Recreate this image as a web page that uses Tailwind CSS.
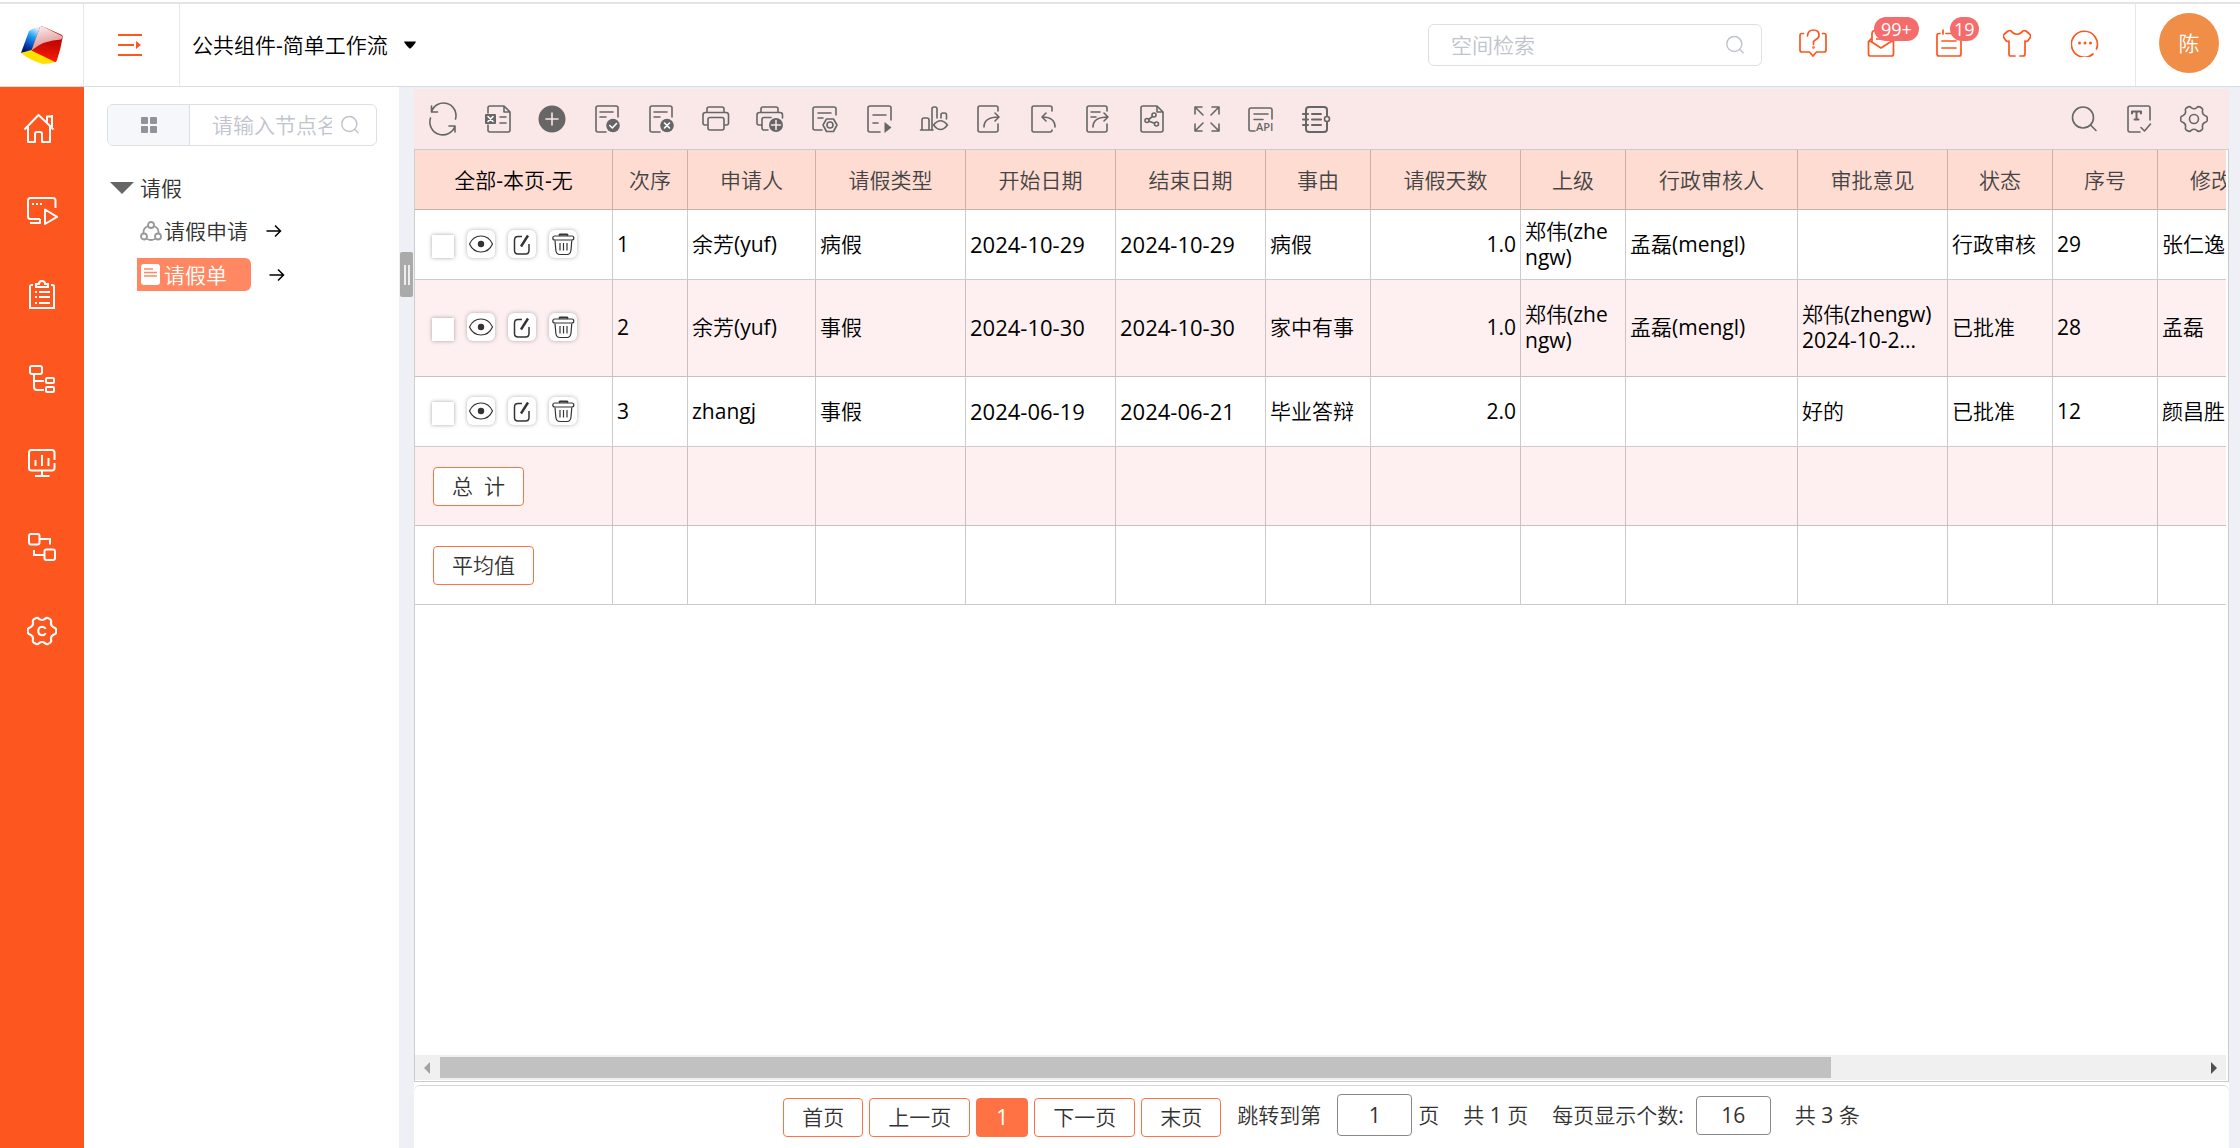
<!DOCTYPE html>
<html lang="zh-CN">
<head>
    <meta charset="UTF-8">
    <meta name="viewport" content="width=device-width, initial-scale=1.0">
    <title>公共组件-简单工作流</title>
    <script src="https://cdn.jsdelivr.net/npm/@tailwindcss/browser@4"></script>
</head>
<body class="h-screen flex flex-col overflow-hidden bg-white text-[21px] leading-[26px] text-[#333] font-['Open_Sans','Noto_Sans_CJK_SC_DemiLight','Noto_Sans_CJK_SC_Light','Noto_Sans_CJK_SC',sans-serif]">

    <!-- shared icons, drawn on a 28px grid -->
    <svg class="hidden">
        <symbol id="search" viewBox="0 0 28 28"><circle cx="13" cy="12.500" r="10.500"/><path d="M20.500 20l5.500 5.500"/></symbol>
        <symbol id="gearline" viewBox="0 0 28 28">
            <path id="tooth" d="M7.200 2.400L8.600 1.800Q10 1.300 11.200 2.600Q14 4.800 16.800 2.600Q18 1.300 19.400 1.800L20.800 2.400"/>
            <use href="#tooth" transform="rotate(60 14 14)"/><use href="#tooth" transform="rotate(120 14 14)"/><use href="#tooth" transform="rotate(180 14 14)"/><use href="#tooth" transform="rotate(240 14 14)"/><use href="#tooth" transform="rotate(300 14 14)"/>
        </symbol>
        <symbol id="eye" viewBox="0 0 28 28"><path d="M2.500 14C5 8.500 9.500 6 14 6s9 2.500 11.500 8C23 19.500 18.500 22 14 22S5 19.500 2.500 14z"/><circle cx="14" cy="14" r="3.200" fill="#333" stroke="none"/></symbol>
        <symbol id="edit" viewBox="0 0 28 28"><path d="M14 6.500H10Q6.500 6.500 6.500 10V20.500Q6.500 24 10 24H17.500Q21 24 21 20.500V14" stroke-width="1.500"/><path d="M20 5.500L13 16.500" stroke-width="2.400"/></symbol>
        <symbol id="trash" viewBox="0 0 28 28"><path d="M10 5.500L11 4.500H18L19 5.500" stroke-width="1.800"/><rect x="3.800" y="6" width="21" height="4" rx="2"/><path d="M6 10.500L6.800 20Q7.200 24.500 11 24.500H18Q21.500 24.500 22 20L22.800 10.500M11 13v7.500M14.500 13v7.500M18 13v7.500"/></symbol>
        <symbol id="arrow" viewBox="0 0 16 14"><path d="M0.500 7h14M9 1.500l5.500 5.500l-5.500 5.500"/></symbol>
    </svg>

    <header class="h-[87px] shrink-0 flex items-stretch border-b border-[#d8dce5] pt-0.5">
        <div class="flex flex-1 border-t-2 border-[#e3e3e3]">
            <a href="#" aria-label="首页" class="w-[84px] flex items-center justify-center border-r border-[#e8e8e8]">
                <svg class="w-[42px] h-[38px]" viewBox="0 0 42 38">
                    <defs>
                        <linearGradient id="blue" x1="0.700" y1="0" x2="0.300" y2="1"><stop offset="0" stop-color="#d5efff"/><stop offset="0.350" stop-color="#1e9df5"/><stop offset="0.800" stop-color="#0030a0"/><stop offset="1" stop-color="#001070"/></linearGradient>
                        <linearGradient id="pale" x1="0.300" y1="0" x2="0.600" y2="1"><stop offset="0" stop-color="#fbeaea"/><stop offset="1" stop-color="#d98484"/></linearGradient>
                        <linearGradient id="red" x1="0.600" y1="0" x2="0.500" y2="1"><stop offset="0" stop-color="#a80000"/><stop offset="0.500" stop-color="#c80a00"/><stop offset="1" stop-color="#ff1c00"/></linearGradient>
                    </defs>
                    <path d="M8 5Q14 1 19 1L11 25L0 27z" fill="url(#blue)"/>
                    <path d="M0 27L12 23.500L35 36Q28 38 22 38Q10 35 0 27z" fill="#ffe000"/>
                    <path d="M19 1Q21 0 23 1L41 9Q42 10 41.500 12Q40 22 36 34Q35 37 33 35.500L10.500 24.500z" fill="url(#red)"/>
                    <path d="M19 1Q21 0 23 1L41 10Q41.500 12 40 13.500Q23 14 10.500 24.500z" fill="url(#pale)"/>
                </svg>
            </a>
            <button aria-label="展开菜单" class="w-24 flex items-center justify-center border-r border-[#e8e8e8] pr-1">
                <svg class="w-6 h-6" viewBox="0 0 24 24" fill="none" stroke="#fd561f" stroke-width="1.800"><path d="M0 2H24M0 12H16M0 22H24"/><path d="M18 8l5 4l-5 4z" fill="#fd561f" stroke="none"/></svg>
            </button>
            <button class="flex items-center gap-4 pl-3 text-black">
                公共组件-简单工作流
                <svg class="w-3 h-2" viewBox="0 0 12 8"><path d="M0 0.500H12Q11 3 6.500 7.500H5.500Q1 3 0 0.500z"/></svg>
            </button>

            <div class="ml-auto flex items-center">
                <label class="w-[334px] h-[42px] flex items-center border border-[#dcdfe6] rounded-md pl-[22px] pr-4 mr-[37px]">
                    <input type="text" aria-label="空间检索" placeholder="空间检索" class="flex-1 min-w-0 outline-none placeholder:text-[#c0c4cc]">
                    <svg class="w-5 h-5 fill-none stroke-[#c0c4cc] stroke-2"><use href="#search"/></svg>
                </label>
                <div class="flex items-center gap-10 pb-1 mr-9 text-[#fd561f]">
                    <button aria-label="帮助">
                        <svg class="size-7" viewBox="0 0 28 28" fill="none" stroke="currentColor" stroke-width="1.700" stroke-linecap="round"><path d="M4.500 4.500H3Q1 4.500 1 6.500V21Q1 23 3 23H10.500L14 27L17.500 23H25Q27 23 27 21V6.500Q27 4.500 25 4.500H23.500"/><path d="M8.500 7Q8.800 1 14.500 1T20 6.500Q20 9 17 10.500T14.500 14V15.500"/><circle cx="14.500" cy="18.500" r="0.500"/></svg>
                    </button>
                    <button aria-label="消息" class="relative">
                        <svg class="size-7" viewBox="0 0 28 28" fill="none" stroke="currentColor" stroke-width="1.700" stroke-linejoin="round"><path d="M1.500 12.500H4L14 19L24 12.500H26.500V25Q26.500 27 24.500 27H3.500Q1.500 27 1.500 25zM1.500 12.500L5 9M5 13V4.500Q5 1.500 8 1.500H19M9 6h8M9 10h10"/></svg>
                        <span class="absolute -top-3 left-[7px] h-6 px-[7px] rounded-full bg-[#f56c6c] text-white text-[18px] leading-6">99+</span>
                    </button>
                    <button aria-label="待办" class="relative">
                        <svg class="size-7" viewBox="0 0 28 28" fill="none" stroke="currentColor" stroke-width="1.700" stroke-linecap="round"><path d="M5 4.500H4Q2 4.500 2 6.500V25Q2 27 4 27H24Q26 27 26 25V12M11 4.500H18M8 1v4M7 12h14M7 19h14"/></svg>
                        <span class="absolute -top-3 left-[15px] h-6 px-1 rounded-full bg-[#f56c6c] text-white text-[18px] leading-6">19</span>
                    </button>
                    <button aria-label="主题">
                        <svg class="size-7" viewBox="0 0 28 28" fill="none" stroke="currentColor" stroke-width="1.700" stroke-linecap="round" stroke-linejoin="round"><path d="M12 27H7.500Q6 27 6 25V12Q3.500 13 2.500 11L0.500 8Q0 6.500 1.500 5L5 2Q8 1 9.500 3.500Q14 7 18.500 3.500Q20 1 23 2L26.500 5Q28 6.500 27.500 8L25.500 11Q24.500 13 22 12V25Q22 27 20 27H17"/></svg>
                    </button>
                    <button aria-label="更多">
                        <svg class="size-7" viewBox="0 0 28 28" fill="none" stroke="currentColor" stroke-width="1.700" stroke-linecap="round"><path d="M22 25A13 13 0 1 1 25.500 20"/><g fill="currentColor" stroke="none"><circle cx="8.500" cy="14" r="1.500"/><circle cx="14" cy="14" r="1.500"/><circle cx="19.500" cy="14" r="1.500"/></g></svg>
                    </button>
                </div>
                <div class="h-full flex items-center border-l border-[#e8e8e8] pl-[23px] pr-[21px] pb-1">
                    <button class="size-[60px] rounded-full bg-[#f08e47] text-white">陈</button>
                </div>
            </div>
        </div>
    </header>

    <div class="flex flex-1 min-h-0">
        <nav class="w-[84px] shrink-0 bg-[#fd561f] text-white">
            <a href="#" aria-label="主页" class="h-[82px] flex items-center justify-center pr-1.5">
                <svg class="size-8" viewBox="0 0 32 32" fill="none" stroke="currentColor" stroke-width="2" stroke-linejoin="round"><path d="M1.500 17.500L15.500 3L24 11V4.500H29.500M29 3V16M24 11L30.500 17.500M5 15V30H12V22Q12 20 14 20H17Q19 20 19 22V30H27V15"/></svg>
            </a>
            <a href="#" aria-label="应用" class="h-[84px] flex items-center justify-center">
                <svg class="size-8" viewBox="0 0 32 32" fill="none" stroke="currentColor" stroke-width="2" stroke-linejoin="round"><path d="M14 24H4.500Q2 24 2 21.500V5.500Q2 3 4.500 3H27Q29.500 3 29.500 5.500V13M14 24V28H4M19 14.500V29L31 21.800z"/><path d="M6 9h2M10 9h2M14 9h2"/></svg>
            </a>
            <a href="#" aria-label="任务" class="h-[84px] flex items-center justify-center">
                <svg class="size-8" viewBox="0 0 32 32" fill="none" stroke="currentColor" stroke-width="2"><path d="M7 6H5.500Q4 6 4 7.500V29H28V7.500Q28 6 26.500 6H25M10 8V5H13Q13 2 16 2T19 5H22V8zM9 13h2M9 18h2M9 24h2M13 13h11M13 18h11M13 24h11"/></svg>
            </a>
            <a href="#" aria-label="组织" class="h-[84px] flex items-center justify-center">
                <svg class="size-8" viewBox="0 0 32 32" fill="none" stroke="currentColor" stroke-width="2"><rect x="4" y="3" width="12" height="8" rx="2"/><rect x="20" y="15" width="8" height="5" rx="1"/><rect x="20" y="24" width="8" height="5" rx="1"/><path d="M8 11V24Q8 27 11 27H18M8 18H18"/></svg>
            </a>
            <a href="#" aria-label="报表" class="h-[84px] flex items-center justify-center">
                <svg class="size-8" viewBox="0 0 32 32" fill="none" stroke="currentColor" stroke-width="2"><path d="M28.500 13V5.500Q28.500 3 26 3H5.500Q3 3 3 5.500V21Q3 23.500 5.500 23.500H26Q28.500 23.500 28.500 21V16M16 24V29M9 29H23.500M9.500 13V19M16 8V19M22.500 11V19"/></svg>
            </a>
            <a href="#" aria-label="流程" class="h-[84px] flex items-center justify-center">
                <svg class="size-8" viewBox="0 0 32 32" fill="none" stroke="currentColor" stroke-width="2"><rect x="3" y="3" width="10.500" height="10.500" rx="2"/><rect x="18.500" y="18.500" width="10.500" height="10.500" rx="2"/><path d="M14 8H24V13.500M18 24H8V19"/></svg>
            </a>
            <a href="#" aria-label="系统设置" class="h-[84px] flex items-center justify-center">
                <svg class="size-8" viewBox="-1 -1 30 30" fill="none" stroke="currentColor" stroke-width="2"><use href="#gearline" width="28" height="28"/><path d="M17.500 12Q16.500 10 14 10Q10.500 10.500 10.500 14T14 18Q16.500 18 17.500 16"/></svg>
            </a>
        </nav>

        <aside class="w-[315px] shrink-0 pt-[17px] px-[23px]">
            <div class="w-[270px] h-[42px] flex border border-[#dcdfe6] rounded-md overflow-hidden">
                <button aria-label="视图" class="w-[82px] shrink-0 flex items-center justify-center bg-[#f5f7fa] border-r border-[#dcdfe6]">
                    <svg class="size-4" viewBox="0 0 16 16" fill="#909399"><rect width="7" height="7" rx="1"/><rect x="9" width="7" height="7" rx="1"/><rect y="9" width="7" height="7" rx="1"/><rect x="9" y="9" width="7" height="7" rx="1"/></svg>
                </button>
                <label class="flex-1 min-w-0 flex items-center gap-2 pl-[22px] pr-4">
                    <input type="text" aria-label="节点名称" placeholder="请输入节点名称" class="flex-1 min-w-0 outline-none placeholder:text-[#c0c4cc]">
                    <svg class="w-5 h-5 shrink-0 fill-none stroke-[#c0c4cc] stroke-2"><use href="#search"/></svg>
                </label>
            </div>
            <ul class="mt-[26px] pl-[3px]">
                <li class="h-8 flex items-center gap-1.5">
                    <svg class="w-6 h-3" viewBox="0 0 24 12" fill="#666"><path d="M0 0H24L12 12z"/></svg>
                    请假
                </li>
                <li class="h-[54px] flex items-center gap-[18px] pl-[30px]">
                    <a href="#" class="flex items-center gap-0.5">
                        <svg class="w-[22px] h-5" viewBox="0 0 22 20" fill="none" stroke="#999" stroke-width="1.800"><circle cx="11" cy="4" r="3"/><circle cx="4" cy="15.500" r="3"/><circle cx="18" cy="15.500" r="3"/><path d="M8 5Q3 7 3.500 12.500M14 5Q19 7 18.500 12.500M7 18Q11 20 15 18"/></svg>
                        请假申请
                    </a>
                    <svg class="w-4 h-3.5 fill-none stroke-black stroke-[1.5]"><use href="#arrow"/></svg>
                </li>
                <li class="h-[33px] flex items-center gap-[18px] pl-[27px]">
                    <a href="#" class="w-[114px] h-[33px] flex items-center gap-1 pl-1 rounded-r-md bg-[#ff8862] text-white">
                        <svg class="w-[19px] h-[21px]" viewBox="0 0 19 21"><rect width="19" height="21" rx="3" fill="#fff"/><path d="M3 5H12M3 8.500H16M3 12H16" stroke="#ff8862" stroke-width="1.500"/></svg>
                        请假单
                    </a>
                    <svg class="w-4 h-3.5 fill-none stroke-black stroke-[1.5]"><use href="#arrow"/></svg>
                </li>
            </ul>
        </aside>

        <!-- splitter -->
        <div class="w-[15px] shrink-0 bg-[#eff0f6] pt-[165px] pl-px">
            <div class="w-[13px] h-[45px] rounded-xs bg-[#aaa] flex items-center justify-center gap-0.5">
                <span class="w-0.5 h-5 bg-[#eee]"></span>
                <span class="w-0.5 h-5 bg-[#eee]"></span>
            </div>
        </div>

        <main class="flex-1 min-w-0 flex flex-col border-t-2 border-[#eff0f6]">
            <div class="h-[60px] shrink-0 flex items-center justify-between bg-[#fae8e8] px-[15px] pr-[21px]">
                <div id="tools" class="flex items-center justify-between w-[901px]"></div>
                <div id="tools2" class="flex items-center gap-[27px]"></div>
            </div>

            <div class="flex-1 min-h-0 flex flex-col justify-between border border-[#ccc] pr-0.5 pb-px">
                <div class="overflow-hidden">
                    <table class="table-fixed w-[1871px] border-separate border-spacing-0 text-black">
                        <colgroup>
                            <col class="w-[198px]"><col class="w-[75px]"><col class="w-[128px]"><col class="w-[150px]"><col class="w-[150px]"><col class="w-[150px]"><col class="w-[105px]"><col class="w-[150px]"><col class="w-[105px]"><col class="w-[172px]"><col class="w-[150px]"><col class="w-[105px]"><col class="w-[105px]"><col class="w-[128px]">
                        </colgroup>
                        <thead>
                            <tr id="heads" class="h-[60px] bg-[#fedcd2] text-[#444]"></tr>
                        </thead>
                        <tbody id="rows"></tbody>
                    </table>
                </div>
                <div class="h-[25px] shrink-0 flex items-center justify-between bg-[#f0f0f0] px-[9px]">
                    <svg class="w-1.5 h-3" viewBox="0 0 6 12" fill="#a3a3a3"><path d="M6 0V12L0 6z"/></svg>
                    <div class="flex-1 mx-2.5"><div class="h-[21px] w-[79%] bg-[#c1c1c1]"></div></div>
                    <svg class="w-1.5 h-3" viewBox="0 0 6 12" fill="#505050"><path d="M0 0V12L6 6z"/></svg>
                </div>
            </div>

            <footer class="h-[63px] shrink-0 mt-[3px] border-t border-[#d4d4d4] rounded-t-md flex items-center justify-center pb-1">
                <div class="flex gap-1.5 pt-1">
                    <button class="h-[39px] px-[18px] border border-[#ff7243] rounded-sm">首页</button>
                    <button class="h-[39px] px-[18px] border border-[#ff7243] rounded-sm">上一页</button>
                    <button class="h-[39px] px-[19px] border border-[#ff7243] rounded-sm bg-[#ff7243] text-white">1</button>
                    <button class="h-[39px] px-[18px] border border-[#ff7243] rounded-sm">下一页</button>
                    <button class="h-[39px] px-[18px] border border-[#ff7243] rounded-sm">末页</button>
                </div>
                <label for="page" class="ml-4">跳转到第</label>
                <input id="page" type="text" value="1" class="w-[75px] h-[42px] ml-4 mr-1.5 border border-[#888] rounded-sm text-center outline-none">
                <span>页</span>
                <span class="ml-6">共 1 页</span>
                <label for="size" class="ml-6">每页显示个数:</label>
                <input id="size" type="text" value="16" class="w-[75px] h-[39px] ml-3 mr-6 border border-[#888] rounded-sm text-center outline-none">
                <span>共 3 条</span>
            </footer>
        </main>
        <div class="w-[11px] shrink-0 bg-[#eff0f6]"></div>
    </div>

    <script>
        // [label, inner svg]
        const tools = [
            ['刷新', '<path d="M2.500 1V7H8.500M2.500 7A12.500 12.500 0 0 1 26.500 14M26 27V21H20M26 21A12.500 12.500 0 0 1 1.500 13"/>'],
            ['导出Excel', '<path d="M4 8V3Q4 1 6 1H20L26 7V25Q26 27 24 27H6Q4 27 4 25V20M20 1V7H26M16 12h6M16 18h6"/><rect x="1" y="9" width="11" height="10" rx="1" fill="#666" stroke="none"/><path d="M4 11.500l5 5M9 11.500l-5 5" stroke="#fff"/>'],
            ['新增', '<circle cx="14" cy="14" r="13.500" fill="#666" stroke="none"/><path d="M8 14h12M14 8v12" stroke="#fae8e8"/>'],
            ['审核', '<path d="M13 27H5Q3 27 3 25V3Q3 1 5 1H23Q25 1 25 3V12M7 7h13M7 12h6"/><circle cx="20" cy="20.500" r="6.800" fill="#666" stroke="none"/><path d="M16.800 20.500l2.500 2.500l4.200-4.500" stroke="#fff"/>'],
            ['取消审核', '<path d="M13 27H5Q3 27 3 25V3Q3 1 5 1H23Q25 1 25 3V12M7 7h13M7 12h6"/><circle cx="20" cy="20.500" r="6.800" fill="#666" stroke="none"/><path d="M17.500 18l5 5M22.500 18l-5 5" stroke="#fff"/>'],
            ['打印', '<path d="M5 7V4Q5 2 7 2H20Q22 2 22 4V7M5 20H3Q1 20 1 18V10Q1 7.500 3.500 7.500H24Q26.500 7.500 26.500 10V18Q26.500 20 24.500 20H23"/><rect x="6" y="12.500" width="16" height="12.500" rx="2"/>'],
            ['批量打印', '<path d="M5 7V4Q5 2 7 2H20Q22 2 22 4V7M5 20H3Q1 20 1 18V10Q1 7.500 3.500 7.500H24Q26.500 7.500 26.500 10V13M12 25H8Q6 25 6 23V14.500Q6 12.500 8 12.500H15"/><circle cx="20" cy="20" r="7" fill="#666" stroke="none"/><path d="M15.500 20h9M20 15.500v9" stroke="#fae8e8"/>'],
            ['打印设置', '<path d="M11 25H4Q2 25 2 23V4Q2 2 4 2H23Q25 2 25 4V10M7 8h13M7 13h5"/><path d="M15.500 14H22.500L26 20L22.500 26.500H15.500L12 20z"/><circle cx="19" cy="20" r="3"/>'],
            ['执行', '<path d="M14 27H4Q2 27 2 25V3Q2 1 4 1H23Q25 1 25 3V15M7 10h13M7 18h5"/><path d="M18.500 17V28L25.500 22.500z" fill="#666" stroke="none"/>'],
            ['图表', '<path d="M0.500 25H13M2 25V15Q2 13 4 13H7Q9 13 9 15V25M12 25V4Q12 2 14 2H15Q17 2 17 4V13M21 13V10Q21 8 23 8H24.500Q26.500 8 26.500 10V14M13.500 20Q20.500 11.500 27.500 20Q20.500 29 13.500 20z"/>'],
            ['转出', '<path d="M23 6V3Q23 1 21 1H5Q3 1 3 3V25Q3 27 5 27H21Q23 27 23 25V19M9 22Q9 12 24 12M20 8l4 4l-4 4"/>'],
            ['退回', '<path d="M23 6V3Q23 1 21 1H5Q3 1 3 3V25Q3 27 5 27H21Q23 27 23 25M26 22Q26 12 13 12M17 8l-4 4l4 4"/>'],
            ['转交', '<path d="M23 6V3Q23 1 21 1H5Q3 1 3 3V25Q3 27 5 27H21Q23 27 23 25V19M9 22Q9 12 24 12M20 8l4 4l-4 4M7 7h9M7 12h5"/>'],
            ['分享', '<path d="M19 1H5Q3 1 3 3V25Q3 27 5 27H23Q25 27 25 25V7zM19 1V7H25"/><circle cx="9" cy="15.500" r="2"/><circle cx="16" cy="10" r="2"/><circle cx="18.500" cy="19" r="2"/><path d="M10.500 14.500L14.500 11.500M11 16.300L16.500 18.300"/>'],
            ['全屏', '<path d="M10 10L2 2M2 9V2H9M18 10L26 2M19 2H26V9M10 18L2 26M2 19V26H9M18 18L26 26M26 19V26H19"/>'],
            ['接口', '<path d="M8 26H4Q2 26 2 24V5Q2 3 4 3H23Q25 3 25 5V14M7 9h14M7 14.500h9"/><text x="9" y="26" font-size="11" fill="#666" stroke="none" font-family="Open Sans" font-weight="600">API</text>'],
            ['日志', '<path d="M25 11V5Q25 2 22 2H7Q4 2 4 5V24Q4 27 7 27H22Q25 27 25 24V17M1 9h5M1 14.500h5M1 20h5M10 9h9M10 14.500h9M10 20h9" stroke-width="2"/><circle cx="25" cy="14" r="2.500"/>']
        ];
        const tools2 = [
            ['搜索', '<use href="#search"/>'],
            ['文本', '<path d="M15 27H5Q3 27 3 25V3Q3 1 5 1H23Q25 1 25 3V15M16 22.500l3.500 3.500l6-7"/><path d="M7 8.500V6.500H16V8.500M11.500 6.500V14.500M9.500 14.500H13.500" stroke-width="2"/>'],
            ['设置', '<use href="#gearline"/><circle cx="14" cy="14" r="4.500"/>']
        ];
        const toolButton = ([label, body]) => `<button aria-label="${label}">
            <svg class="size-7 overflow-visible" viewBox="0 0 28 28" fill="none" stroke="#666" stroke-width="1.600" stroke-linecap="round" stroke-linejoin="round">${body}</svg>
        </button>`;
        document.getElementById('tools').innerHTML = tools.map(toolButton).join('');
        document.getElementById('tools2').innerHTML = tools2.map(toolButton).join('');

        const heads = ['全部-本页-无', '次序', '申请人', '请假类型', '开始日期', '结束日期', '事由', '请假天数', '上级', '行政审核人', '审批意见', '状态', '序号', '修改人'];
        document.getElementById('heads').innerHTML = heads.map((head, i) =>
            `<th scope="col" class="border-r border-b border-black/20 font-normal ${i == 0 ? 'text-black' : ''}">${head}</th>`).join('');

        const records = [
            ['1', '余芳(yuf)', '病假', '2024-10-29', '2024-10-29', '病假', '1.0', '郑伟(zhe<br>ngw)', '孟磊(mengl)', '', '行政审核', '29', '张仁逸'],
            ['2', '余芳(yuf)', '事假', '2024-10-30', '2024-10-30', '家中有事', '1.0', '郑伟(zhe<br>ngw)', '孟磊(mengl)', '郑伟(zhengw)<br>2024-10-2...', '已批准', '28', '孟磊'],
            ['3', 'zhangj', '事假', '2024-06-19', '2024-06-21', '毕业答辩', '2.0', '', '', '好的', '已批准', '12', '颜昌胜']
        ];
        const action = (label, icon) => `<button aria-label="${label}" class="size-7 rounded-md bg-white shadow-[0_0_4px_rgba(0,0,0,0.3)]">
            <svg class="size-7 fill-none stroke-[#333] stroke-[1.2]"><use href="#${icon}"/></svg>
        </button>`;

        let list = '';
        records.forEach((row, i) => {
            list += `<tr class="${i == 1 ? 'h-[97px] bg-[#fef0f0]' : 'h-[70px]'}">
                <td class="border-r border-b border-black/20 pb-0.5">
                    <div class="flex items-end gap-[13px] pl-[17px]">
                        <input type="checkbox" aria-label="选择第${row[0]}行" class="appearance-none w-[22px] h-[23px] bg-white shadow-[0_0_4px_rgba(0,0,0,0.35)]">
                        ${action('查看', 'eye')}${action('编辑', 'edit')}${action('删除', 'trash')}
                    </div>
                </td>`;
            row.forEach((text, c) => {
                list += `<td class="border-r border-b border-black/20 px-1 pb-0.5 whitespace-nowrap ${c == 6 ? 'text-right' : ''} ${c == 3 || c == 4 ? 'text-[22px]' : ''}">${text}</td>`;
            });
            list += '</tr>';
        });
        ['总&nbsp; 计', '平均值'].forEach((name, i) => {
            list += `<tr class="h-[79px] ${i == 0 ? 'bg-[#fef0f0]' : ''}">
                <td class="border-r border-b border-black/20 pl-[18px]"><button class="block h-[39px] px-[18px] bg-white border border-[#ff7243] rounded-sm text-[#333]">${name}</button></td>
                ${'<td class="border-r border-b border-black/20"></td>'.repeat(13)}
            </tr>`;
        });
        document.getElementById('rows').innerHTML = list;
    </script>
</body>
</html>
